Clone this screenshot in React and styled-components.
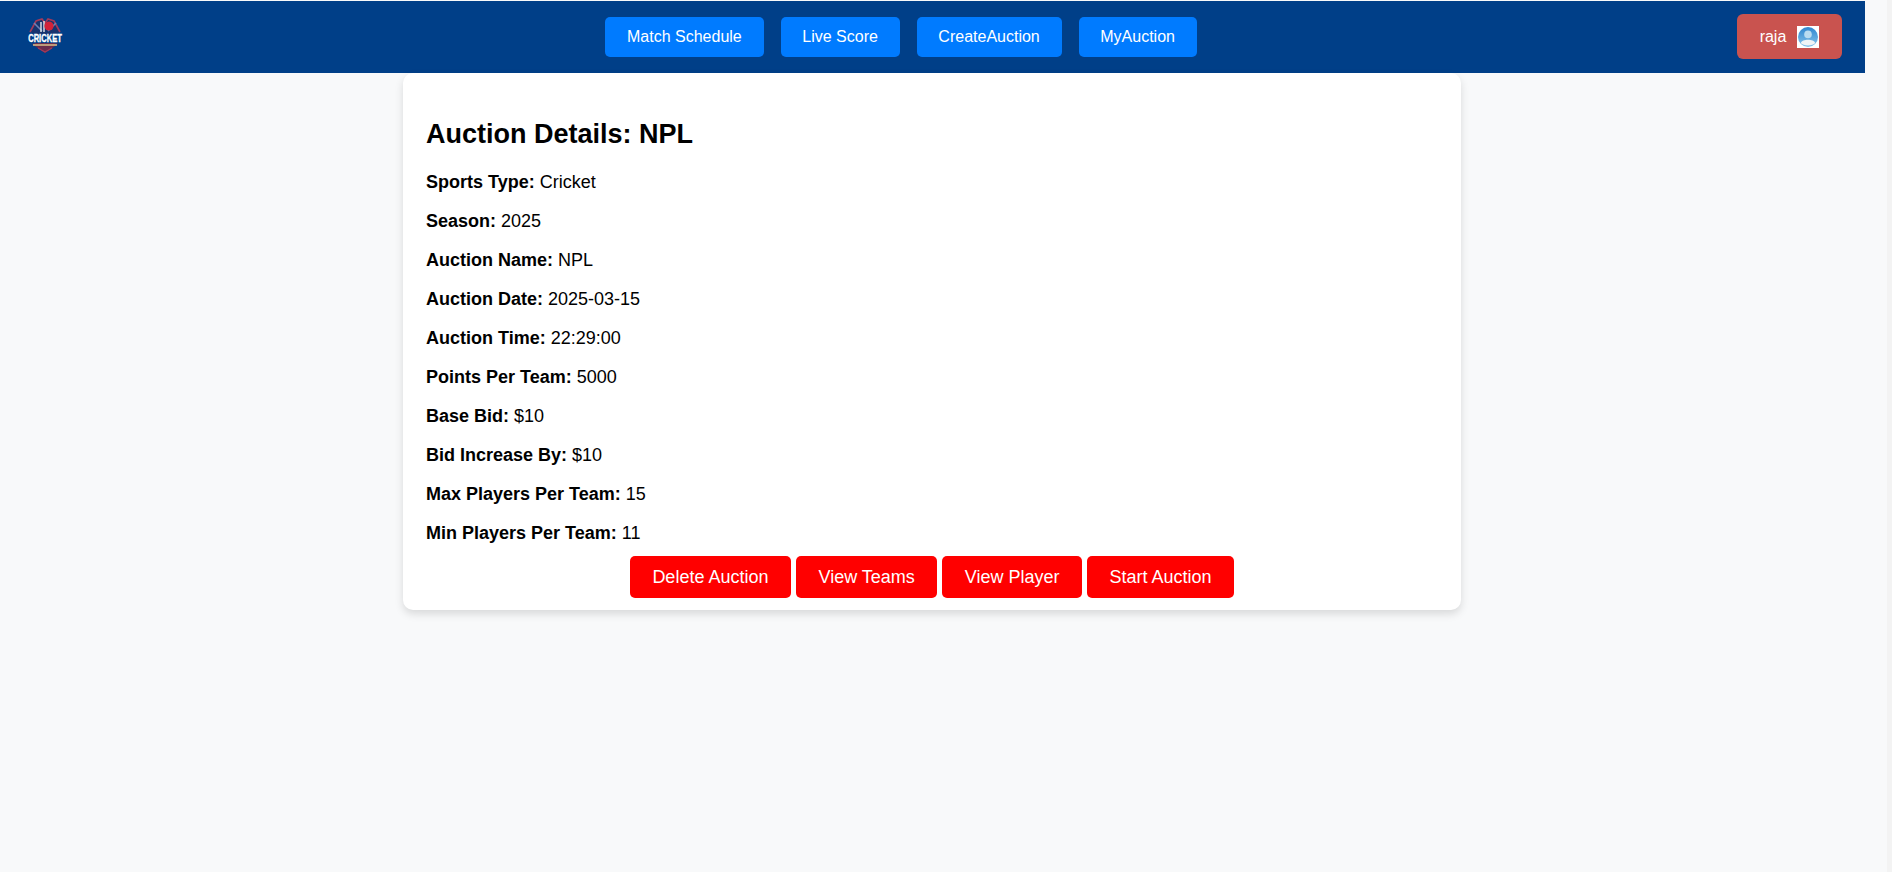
import React from 'react'
import styled, { createGlobalStyle } from 'styled-components'

const details = [
  ['Sports Type', 'Cricket'],
  ['Season', '2025'],
  ['Auction Name', 'NPL'],
  ['Auction Date', '2025-03-15'],
  ['Auction Time', '22:29:00'],
  ['Points Per Team', '5000'],
  ['Base Bid', '$10'],
  ['Bid Increase By', '$10'],
  ['Max Players Per Team', '15'],
  ['Min Players Per Team', '11'],
]

function CricketLogo() {
  return (
    <svg width="40" height="40" viewBox="0 0 40 40">
      {/* crossed bats behind the wicket */}
      <path d="M5 15 L11 4 L17 2 L20 6 L23 2 L29 4 L35 15 L30 17 L10 17 Z" fill="#17346f" />
      <path d="M5 15 L11 4 L17 2 L20 6 L23 2 L29 4 L35 15" fill="none" stroke="#a33a5a" strokeWidth="1.6" />
      <path d="M9 6 L17 14 M31 6 L23 14" stroke="#6d80b4" strokeWidth="1.6" />
      <path d="M16 5 V15 M19 4 V15" stroke="#f3f3f3" strokeWidth="1.3" />
      <circle cx="24" cy="9" r="4.6" fill="#d32238" />
      <text transform="translate(20 24.5) scale(0.84 1.16)" textAnchor="middle" fontFamily="Liberation Sans, sans-serif" fontWeight="700" fontSize="9" fill="#fff" stroke="#fff" strokeWidth="0.3">CRICKET</text>
      <path d="M7 27 L20 36 L33 27 L29 26 H11 Z" fill="#6b2c4c" />
      <path d="M8 28 H32" stroke="#d9c08a" strokeWidth="1.5" />
      <path d="M13 31 L20 35 L27 31" fill="none" stroke="#a33a5a" strokeWidth="1.2" />
    </svg>
  )
}

function Avatar() {
  return (
    <svg width="22" height="22" viewBox="0 0 22 22">
      <rect width="22" height="22" fill="#fff" />
      <defs>
        <linearGradient id="avatarBlue" x1="0" y1="0" x2="0" y2="1">
          <stop offset="0" stopColor="#2f86cf" />
          <stop offset="1" stopColor="#86c4ea" />
        </linearGradient>
      </defs>
      <circle cx="11" cy="11" r="10" fill="url(#avatarBlue)" />
      <circle cx="11" cy="8.4" r="3.8" fill="#b9dcf0" />
      <path d="M3.8 17 C5.2 12.6 16.8 12.6 18.2 17 C16 20.2 6 20.2 3.8 17 Z" fill="#f0f4f6" />
    </svg>
  )
}

export default function App() {
  return (
    <>
      <GlobalStyle />
      <Page>
        <Header>
          <Logo><CricketLogo /></Logo>
          <Nav>
            <NavButton>Match Schedule</NavButton>
            <NavButton>Live Score</NavButton>
            <NavButton>CreateAuction</NavButton>
            <NavButton>MyAuction</NavButton>
          </Nav>
          <UserButton>
            <span>raja</span>
            <Avatar />
          </UserButton>
        </Header>
        <Card>
          <Title>Auction Details: NPL</Title>
          {details.map(([label, value]) => (
            <Row key={label}><strong>{label}:</strong> {value}</Row>
          ))}
          <Actions>
            <ActionButton>Delete Auction</ActionButton>
            <ActionButton>View Teams</ActionButton>
            <ActionButton>View Player</ActionButton>
            <ActionButton>Start Auction</ActionButton>
          </Actions>
        </Card>
      </Page>
      <ScrollStrip />
    </>
  )
}

const GlobalStyle = createGlobalStyle`
  html, body {
    margin: 0;
    height: 100%;
    background: #f8f9fa;
    font-family: "Liberation Sans", Arial, sans-serif;
    overflow: hidden;
  }
`

const Page = styled.div`
  width: 1865px;
  padding-top: 1px;
`

const ScrollStrip = styled.div`
  position: fixed;
  top: 0;
  right: 0;
  bottom: 0;
  width: 5px;
  background: #f3f3f3;
`

const Header = styled.header`
  height: 72px;
  background: #003f88;
  display: flex;
  align-items: center;
  justify-content: space-between;
  padding: 0 23px 0 25px;
`

const Logo = styled.div`
  width: 40px;
  height: 40px;
`

const Nav = styled.nav`
  display: flex;
  gap: 17px;
`

const NavButton = styled.button`
  height: 40px;
  padding: 0 21.75px;
  border: none;
  border-radius: 5px;
  background: #007bff;
  color: #fff;
  font-family: inherit;
  font-size: 16px;
`

const UserButton = styled.button`
  width: 105px;
  height: 45px;
  margin-bottom: 1px;
  border: none;
  border-radius: 6px;
  background: #c9534f;
  color: #fff;
  font-family: inherit;
  font-size: 16px;
  display: flex;
  align-items: center;
  justify-content: center;
  gap: 11px;
`

const Card = styled.main`
  width: 1058px;
  box-sizing: border-box;
  margin: 0 404px 0 403px;
  padding: 46px 23px 12px;
  background: #fff;
  border-radius: 10px;
  box-shadow: 0 4px 8px rgba(0, 0, 0, 0.13);
`

const Title = styled.h2`
  margin: 0 0 22px;
  font-size: 27px;
  color: #000;
`

const Row = styled.p`
  margin: 0 0 18px;
  font-size: 18px;
  color: #000;

  &:last-of-type {
    margin-bottom: 12px;
  }
`

const Actions = styled.div`
  display: flex;
  justify-content: center;
  gap: 5px;
`

const ActionButton = styled.button`
  height: 42px;
  padding: 0 22.5px;
  border: none;
  border-radius: 5px;
  background: #ff0000;
  color: #fff;
  font-family: inherit;
  font-size: 18px;
`
